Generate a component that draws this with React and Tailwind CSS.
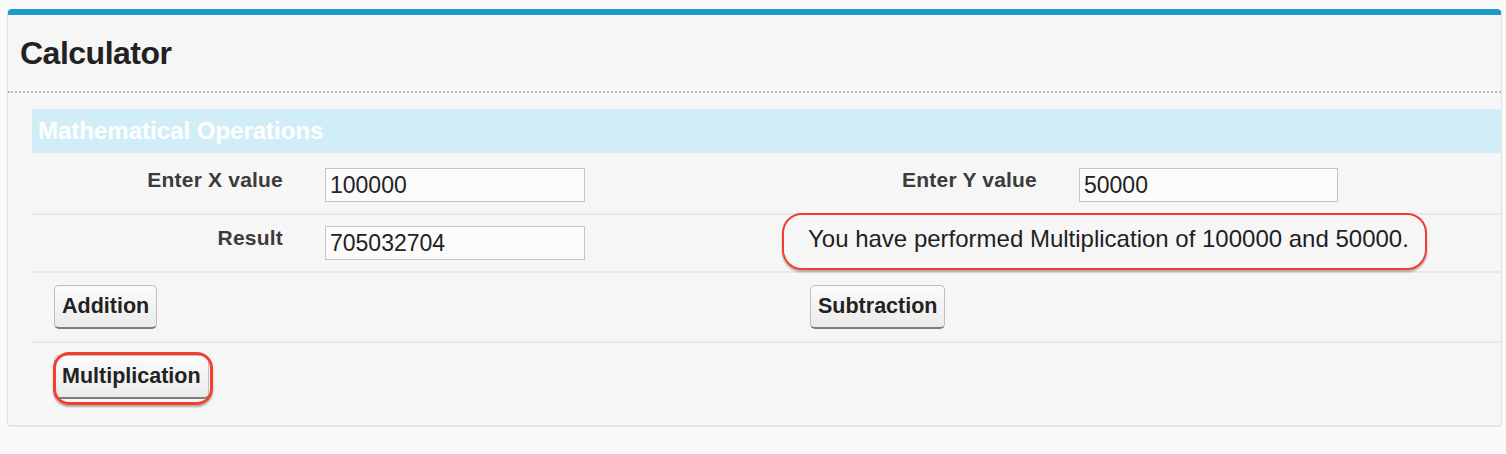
import React from "react";

const font = { fontFamily: '"Liberation Sans", Arial, Helvetica, sans-serif' };

function Label({ children }) {
  return (
    <div className="w-[251px] shrink-0 text-right text-[21px] leading-[24px] font-bold tracking-[0.2px] text-[#3b3b3b]">
      {children}
    </div>
  );
}

function Field({ value, w }) {
  return (
    <input
      readOnly
      value={value}
      className={`${w} h-[34px] ml-[42px] border border-[#c9c4c4] bg-[#fbfbfb] pl-[4px] text-[23px] text-[#222] outline-none`}
      style={font}
    />
  );
}

function Btn({ children, className = "px-[7px]" }) {
  return (
    <button
      className={`h-[44px] rounded-[5px] border border-[#c3bebe] border-b-[#7c7c7c] border-b-2 bg-gradient-to-b from-[#fbfbfb] to-[#ebebeb] text-[21.5px] font-bold text-[#222] ${className}`}
      style={font}
    >
      {children}
    </button>
  );
}

export default function App() {
  return (
    <div className="min-h-[454px] bg-[#fafafa] pt-[9px] pl-[7px] pr-[4px]" style={font}>
      <div className="rounded-t-[5px] rounded-b-[4px] border-t-[6px] border-t-[#1b9bc8] border-x border-x-[#e2e2e2] border-b-2 border-b-[#e6e6e6] bg-[#f6f6f6]">
        <div className="h-[78px] pl-3 pt-[20px] border-b-2 border-dotted border-b-[#b8b8b8]">
          <h1 className="text-[32px] leading-[36px] font-bold tracking-[-0.5px] text-[#222]">Calculator</h1>
        </div>
        <div className="pl-6 pt-4">
          <div className="h-[44px] bg-[#d1eef8] pl-[6px] text-[24px] leading-[44px] font-bold text-white">
            Mathematical Operations
          </div>

          {/* Row 1 */}
          <div className="flex border-b-2 border-[#e8e8e8]">
            <div className="flex w-[754px] shrink-0 items-start pt-[15px] pb-[11px]">
              <Label>Enter X value</Label>
              <Field value="100000" w="w-[260px]" />
            </div>
            <div className="flex flex-1 items-start pt-[15px] pb-[11px]">
              <Label>Enter Y value</Label>
              <Field value="50000" w="w-[259px]" />
            </div>
          </div>

          {/* Row 2 */}
          <div className="flex border-b-2 border-[#e8e8e8]">
            <div className="flex w-[754px] shrink-0 items-start pt-[11px] pb-[11px]">
              <Label>Result</Label>
              <Field value="705032704" w="w-[260px]" />
            </div>
            <div className="flex-1">
              <div className="-mt-[2px] -ml-[4px] h-[57px] w-[645px] rounded-[20px] border-[2.5px] border-[#f23d2c] pl-[24px] pt-[10px] text-[24px] leading-[28px] text-[#1f1f1f] shadow-[0_2px_2px_rgba(0,0,0,0.3)]">
                You have performed Multiplication of 100000 and 50000.
              </div>
            </div>
          </div>

          {/* Row 3 */}
          <div className="flex border-b-2 border-[#e8e8e8]">
            <div className="w-[754px] shrink-0 pl-[22px] pt-[12px] pb-[12px]">
              <Btn>Addition</Btn>
            </div>
            <div className="flex-1 pl-[24px] pt-[12px] pb-[12px]">
              <Btn>Subtraction</Btn>
            </div>
          </div>

          {/* Row 4 */}
          <div className="flex pt-[12px] pb-[26px] pl-[22px]">
            <div className="relative">
              <Btn className="px-[7px]">Multiplication</Btn>
              <div className="pointer-events-none absolute -left-[1px] -top-[3px] -right-[4px] -bottom-[6px] rounded-[16px] border-[3px] border-[#f2402e] shadow-[0_2px_2px_rgba(0,0,0,0.3)]" />
            </div>
          </div>
        </div>
      </div>
    </div>
  );
}
